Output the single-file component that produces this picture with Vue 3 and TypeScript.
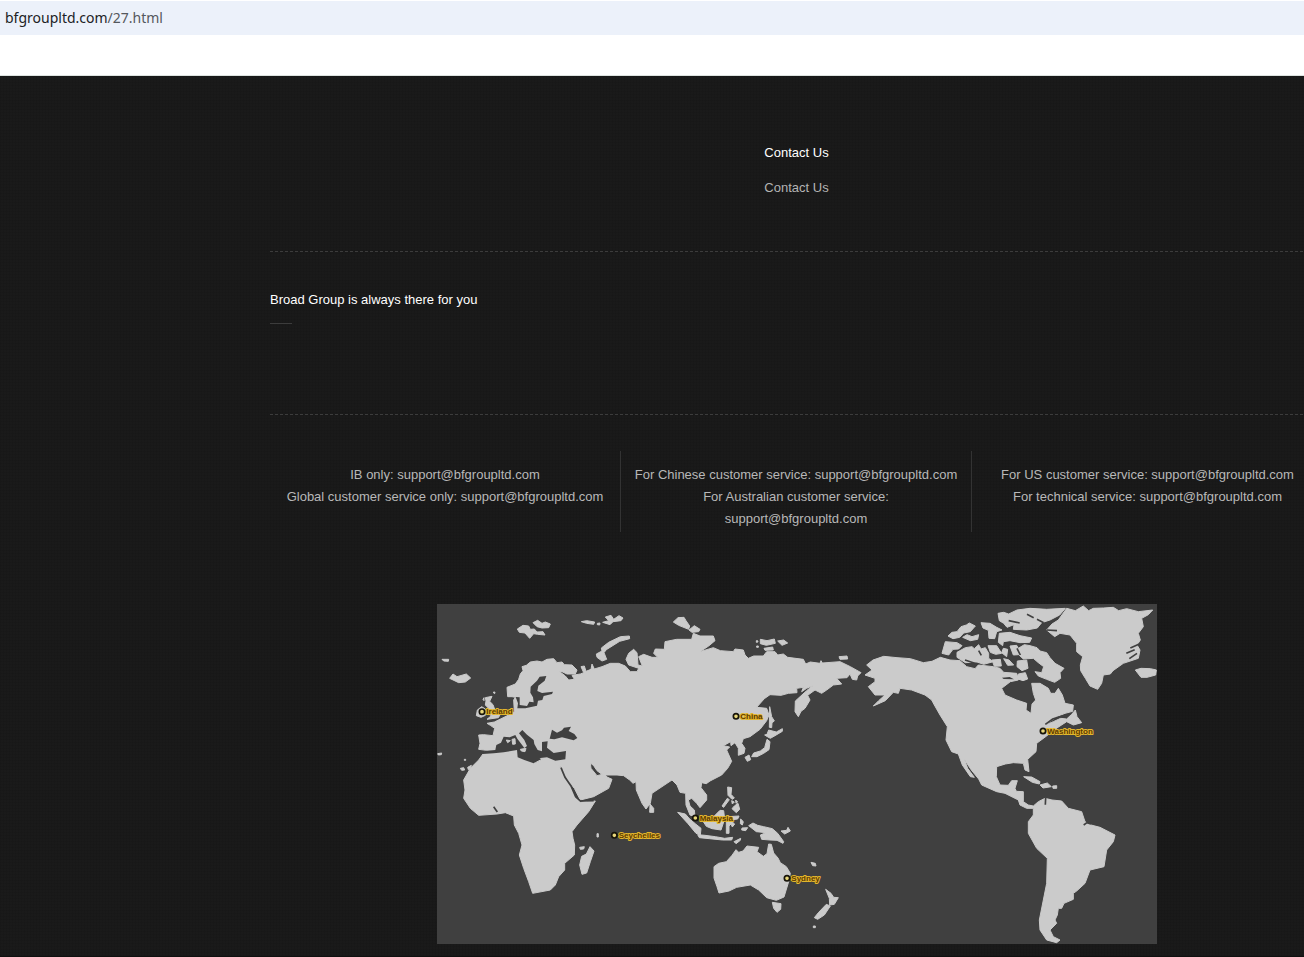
<script setup lang="ts">
interface Office {
  name: string
  x: number
  y: number
}

const services: string[][] = [
  ['IB only: support@bfgroupltd.com', 'Global customer service only: support@bfgroupltd.com'],
  ['For Chinese customer service: support@bfgroupltd.com', 'For Australian customer service: support@bfgroupltd.com'],
  ['For US customer service: support@bfgroupltd.com', 'For technical service: support@bfgroupltd.com'],
]

const offices: Office[] = [
  { name: 'Ireland', x: 135, y: 335 },
  { name: 'China', x: 897, y: 349 },
  { name: 'Washington', x: 1818, y: 393 },
  { name: 'Malaysia', x: 775, y: 654 },
  { name: 'Seychelles', x: 532, y: 706 },
  { name: 'Sydney', x: 1050, y: 835 },
]

const land: string[] = [
  // Europe and Asia
  'M125 448L129 430L125 405L140 404L168 407L173 385L160 376L150 370L172 366L195 355L215 345L232 335L230 300L235 292L225 290L212 290L210 262L235 252L245 238L250 222L258 212L255 200L268 196L280 186L300 183L315 186L330 178L350 176L360 188L375 186L382 194L405 195L420 210L415 222L390 222L375 215L368 215L385 228L395 240L412 238L405 226L430 222L440 218L432 200L442 198L447 214L462 208L465 192L472 207L495 200L520 190L545 190L565 198L580 215L600 215L605 205L575 195L567 178L575 160L590 148L600 158L602 180L603 195L616 198L605 170L620 163L645 172L662 172L650 160L655 147L682 148L684 125L719 118L764 118L769 100L789 108L829 108L834 122L815 138L789 155L829 143L850 152L889 155L894 147L919 150L924 165L934 175L950 168L979 168L989 155L1014 155L1022 165L1039 162L1052 172L1099 178L1106 192L1120 186L1149 190L1152 182L1156 189L1209 185L1240 200L1272 218L1262 228L1259 240L1246 238L1239 222L1230 233L1199 235L1214 252L1189 255L1169 270L1154 280L1134 270L1112 286L1119 300L1104 325L1092 334L1084 350L1074 335L1075 303L1109 272L1127 257L1109 265L1094 275L1099 262L1079 265L1080 278L1054 280L1032 286L999 284L982 296L959 322L989 325L996 345L989 362L969 388L939 410L919 416L914 430L924 445L921 460L904 466L904 445L894 428L882 437L881 425L859 437L878 441L869 450L884 484L872 505L854 525L819 543L808 551L794 548L792 563L809 585L809 600L789 623L779 610L764 595L754 600L759 618L772 630L774 650L759 645L747 615L746 580L729 577L720 555L705 540L690 550L645 580L640 610L627 627L615 610L598 570L597 545L588 550L578 540L560 527L540 525L505 525L492 521L480 512L470 497L460 489L462 505L480 527L500 522L512 532L525 538L515 565L470 590L430 600L412 565L395 545L370 500L300 470Z',
  // Africa
  'M143 455L200 450L240 462L295 488L330 470L367 498L382 530L400 555L415 590L430 607L452 604L475 603L455 635L420 675L405 695L408 715L413 735L412 765L383 790L383 810L365 830L355 855L340 870L287 880L275 845L260 805L247 765L255 735L245 700L232 675L230 648L215 642L205 638L180 642L125 646L100 625L80 595L84 570L80 540L100 505L125 480Z',
  // North and South America
  'M1289 195L1308 180L1340 169L1380 173L1420 176L1459 188L1485 184L1510 172L1539 180L1569 182L1589 200L1614 206L1624 195L1669 200L1689 205L1700 217L1739 220L1744 240L1720 245L1694 265L1704 285L1739 300L1769 310L1767 330L1782 340L1785 312L1796 300L1789 280L1784 250L1809 250L1834 265L1841 280L1854 280L1864 265L1876 285L1884 310L1909 315L1907 334L1884 340L1859 350L1825 375L1849 365L1871 355L1889 357L1904 343L1915 330L1920 350L1934 368L1909 375L1889 365L1869 378L1852 389L1826 410L1799 430L1797 455L1772 478L1776 515L1764 510L1759 490L1729 488L1705 492L1679 500L1678 530L1689 555L1714 556L1724 542L1741 542L1734 565L1738 574L1759 575L1759 605L1774 615L1789 618L1804 605L1824 595L1845 600L1874 603L1894 625L1934 635L1944 665L1962 675L1989 682L2034 705L2029 725L2009 750L2001 800L1959 810L1944 850L1919 873L1909 880L1909 898L1881 910L1874 925L1864 925L1861 945L1854 960L1859 970L1839 990L1849 1010L1869 1020L1859 1028L1829 1020L1809 990L1807 960L1819 900L1829 850L1831 775L1799 745L1774 700L1774 665L1789 645L1789 625L1769 625L1749 615L1744 600L1704 580L1679 575L1634 555L1625 537L1603 510L1582 478L1592 505L1612 532L1600 530L1576 495L1564 462L1544 455L1527 420L1531 380L1509 345L1492 315L1484 300L1464 285L1424 270L1389 265L1384 280L1369 277L1345 302L1309 318L1325 302L1344 285L1314 285L1294 260L1314 245L1314 235L1284 225L1305 210Z',
  // Greenland and Iceland
  'M1829 90L1845 72L1864 60L1889 25L1915 32L1939 18L1955 32L1969 25L2000 24L2029 22L2045 32L2069 26L2104 35L2147 30L2134 44L2114 55L2119 80L2104 100L2110 120L2100 135L2109 150L2104 175L2059 190L2028 212L2020 222L1999 225L1994 250L1982 268L1959 258L1945 235L1931 212L1930 195L1937 170L1919 155L1919 130L1899 105L1869 100L1853 110Z',
  'M2095 210L2112 205L2140 206L2158 210L2156 225L2130 232L2112 232Z',
  'M38 235L48 222L60 230L88 222L101 234L85 246L65 248Z',
  // Canadian islands
  'M1525 125L1560 128L1575 137L1565 147L1548 148L1535 165L1515 160Z',
  'M1560 157L1585 143L1605 140L1612 146L1625 134L1632 147L1645 143L1655 160L1655 175L1669 185L1640 193L1620 186L1585 188L1560 172Z',
  'M1533 108L1545 97L1560 95L1572 80L1588 75L1597 69L1615 78L1600 95L1580 99L1568 112L1548 116Z',
  'M1577 112L1590 104L1605 110L1625 104L1622 118L1600 122Z',
  'M1632 68L1659 70L1679 82L1695 90L1679 95L1673 116L1656 115L1654 91L1638 84Z',
  'M1653 137L1679 137L1694 160L1676 163L1660 157Z',
  'M1683 40L1700 37L1715 42L1740 30L1779 25L1829 28L1885 25L1868 45L1839 60L1814 68L1801 84L1769 90L1729 88L1731 74L1710 82L1700 70L1687 62Z',
  'M1687 100L1719 97L1749 107L1784 114L1778 127L1749 128L1719 122L1699 125L1697 137L1684 127Z',
  'M1719 138L1739 136L1744 145L1762 134L1779 137L1800 143L1809 153L1829 158L1839 173L1854 190L1881 205L1869 218L1871 235L1853 247L1829 238L1804 228L1794 215L1814 218L1820 200L1804 188L1789 175L1759 177L1745 164L1729 165Z',
  'M1699 145L1712 148L1709 170L1694 158Z',
  'M1665 180L1690 178L1693 198L1672 199Z',
  'M1700 176L1716 180L1730 195L1712 196Z',
  'M1741 183L1769 180L1773 205L1755 212L1740 200Z',
  'M1744 222L1765 218L1772 237L1758 242L1740 236Z',
  // Arctic Europe and Siberia
  'M241 87L258 76L275 78L280 88L292 87L300 96L318 95L324 105L302 103L290 101L278 115L264 99L247 97Z',
  'M288 68L302 61L315 70L325 66L340 72L335 83L315 84L300 80Z',
  'M433 65L449 62L473 66L470 73L449 70Z',
  'M481 70L489 69L488 75L481 74Z',
  'M497 67L515 62L505 51L522 46L530 58L546 47L558 54L552 62L528 65L519 74Z',
  'M478 162L495 153L493 144L515 127L550 110L577 108L578 116L548 124L508 149L501 158L509 178L495 183L480 172Z',
  'M709 66L723 53L741 52L747 62L758 78L755 88L725 76Z',
  'M756 90L772 77L789 88L785 95L765 97Z',
  'M970 118L990 122L1012 117L1015 130L988 136L970 131Z',
  'M958 122L962 122L963 126L958 127ZM959 138L964 138L964 142L959 142Z',
  'M1022 123L1040 120L1052 129L1035 136Z',
  'M981 145L1007 141L1009 150L984 151Z',
  'M1206 170L1230 168L1232 177L1209 178Z',
  'M15 178L35 178L34 184L20 183Z',
  // British Isles
  'M145 293L165 289L158 304L168 314L174 331L190 343L184 353L150 358L163 347L151 340L157 327L145 315L147 303Z',
  'M118 347L121 330L134 320L145 327L145 346L132 352Z',
  'M168 277L174 276L173 281ZM138 298L141 293L141 302Z',
  // Madagascar, Sri Lanka
  'M459 740L471 753L460 785L449 819L435 823L428 795L434 769L448 762Z',
  'M639 612L650 625L650 637L638 637Z',
  'M428 742L442 740L440 747L430 748Z',
  'M480 701L484 701L484 711L480 711Z',
  // Sumatra, Java, Borneo, Sulawesi
  'M722 637L745 642L758 657L776 672L792 685L790 705L777 700L753 671Z',
  'M782 704L804 706L835 710L863 715L887 712L884 720L857 720L817 716L787 713Z',
  'M799 665L817 663L849 631L860 632L863 657L852 690L825 686L808 679Z',
  'M868 665L874 650L906 648L902 657L879 660L893 672L886 681L882 672L876 678L876 700L868 700Z',
  'M891 725L911 715L910 721L897 731Z',
  // Philippines and Japan
  'M872 561L884 563L882 583L892 594L885 598L873 586Z',
  'M892 618L903 610L908 628L898 638L885 626Z',
  'M884 602L892 606L886 612ZM896 600L902 606L897 610Z',
  'M871 595L877 599L860 622L855 618Z',
  'M998 320L1004 350L1012 363L1005 368L1004 383L997 382Z',
  'M983 405L990 403L995 390L1018 396L1036 386L1036 394L1014 407L1000 415L991 410Z',
  'M990 418L999 425L996 449L980 460L960 470L944 470L950 459L970 453L983 443Z',
  'M924 472L936 465L941 479L931 484Z',
  // New Guinea and neighbours
  'M935 677L948 669L962 676L980 680L1006 686L1022 700L1040 725L1038 730L1020 721L999 720L974 718L970 705L987 698L958 695Z',
  'M1032 693L1049 691L1053 682L1060 693L1043 702Z',
  'M915 684L932 683L926 692L914 690Z',
  'M911 657L919 665L916 675L910 671Z',
  // Australia, Tasmania, New Zealand
  'M831 800L845 790L868 785L885 766L897 749L905 757L918 753L930 738L965 742L960 755L979 769L990 761L995 732L1003 733L1010 759L1023 774L1030 788L1048 800L1060 820L1055 845L1041 891L1018 901L989 893L965 870L940 855L899 862L876 873L846 879L840 860L831 834Z',
  'M1006 907L1032 911L1031 928L1020 937L1010 925Z',
  'M1166 868L1182 880L1190 892L1204 893L1192 913L1178 915L1177 895Z',
  'M1168 913L1180 918L1162 945L1142 958L1132 953L1145 937Z',
  'M1122 787L1135 790L1137 798L1127 797Z',
  'M1129 978L1135 978L1135 983L1129 983Z',
  // Caribbean
  'M1760 530L1784 531L1809 545L1807 552L1786 547Z',
  'M1809 555L1831 549L1843 560L1818 564Z',
  'M1847 558L1859 557L1859 565L1848 565Z',
  // Atlantic islands
  'M70 505L80 503L83 510L74 511Z',
  'M92 502L103 496L101 505L94 509Z',
  'M82 478L86 478L86 481L82 481Z',
  'M2 461L14 459L13 464L4 465Z',
]

const seas: string[] = [
  // Mediterranean
  'M132 459L143 453L175 450L178 435L192 428L200 410L218 412L235 405L241 416L262 444L270 438L262 420L246 400L256 390L270 404L290 420L292 432L302 450L315 454L315 426L332 424L330 443L350 459L387 453L385 478L355 482L330 472L310 474L290 490L262 480L242 472L240 450L200 457L170 460L137 462Z',
  // Black Sea
  'M338 416L345 389L360 398L375 391L381 383L402 380L395 393L412 402L421 414L410 421L375 412L352 418Z',
  // Baltic Sea
  'M236 291L248 292L248 315L270 318L277 305L290 307L288 292L280 278L281 260L300 242L308 230L328 228L323 242L304 257L301 273L315 279L348 275L345 282L320 288L316 300L303 302L300 317L265 325L241 325L243 310Z',
  // Hudson Strait
  'M1695 233L1718 231L1731 238L1700 237Z',
]

const isles: string[] = ['M225 418L234 416L235 432L227 433Z', 'M250 448L267 445L264 455L253 453Z', 'M208 420L220 422L212 428Z']
const channels: string[] = [
  'M2068 160L2093 149M2077 176L2100 160M2080 144L2107 132',
  'M1825 373L1847 357L1870 350L1890 346',
  'M1584 180L1620 192M1625 152L1633 166M1740 145L1750 165',
  'M170 620L181 636',
  'M372 503L384 532L402 558L416 590L430 603L470 602',
  'M1826 593L1825 614M1940 675L1950 668L1962 672',
  'M1715 62L1748 69M1770 43L1790 53M1800 58L1820 68M1860 92L1829 90',
]
</script>

<template>
  <div class="page">
    <header class="address">
      <span class="host">bfgroupltd.com</span><span class="path">/27.html</span>
    </header>
    <main class="site">
      <div class="content">
        <section class="intro">
          <h1>Contact Us</h1>
          <p>Contact Us</p>
        </section>
        <section class="slogan">
          <h2>Broad Group is always there for you</h2>
        </section>
        <section class="services">
          <div v-for="(lines, i) in services" :key="i" class="service">
            <p v-for="line in lines" :key="line">{{ line }}</p>
          </div>
        </section>
        <svg class="map" viewBox="0 12 2160 1020" role="img" aria-label="World map of offices">
          <rect class="sea" x="0" y="12" width="2160" height="1020" />
          <path v-for="d in land" :key="d" class="land" :d="d" />
          <path v-for="d in seas" :key="d" class="sea" :d="d" />
          <path v-for="d in isles" :key="d" class="land" :d="d" />
          <path v-for="d in channels" :key="d" class="channel" :d="d" />
          <g v-for="o in offices" :key="o.name">
            <text class="label" :x="o.x + 13" :y="o.y + 8">{{ o.name }}</text>
            <circle class="pin" :cx="o.x" :cy="o.y" r="8" />
          </g>
        </svg>
      </div>
    </main>
  </div>
</template>

<style>
body {
  margin: 0;
  background: #191919;
}
</style>

<style scoped>
.page {
  overflow: hidden;
  background: #fff;
  font-family: "Liberation Sans", Arial, sans-serif;
  font-size: 13px;
}

.address {
  height: 34px;
  margin: 1px 0 40px;
  padding-left: 5px;
  background: #ecf1fa;
  font-family: "Noto Sans", "Open Sans", sans-serif;
  font-size: 14px;
  line-height: 34px;
}

.host {
  color: #202124;
}

.path {
  color: #55585d;
}

.site {
  padding-left: 270px;
  border-top: 1px solid #dde3e0;
  border-bottom: 1px solid #101010;
  background-color: #1a1a1a;
  background-image:
    repeating-linear-gradient(90deg, rgb(0 0 0 / 6%) 0 1px, transparent 1px 3px),
    repeating-linear-gradient(rgb(0 0 0 / 6%) 0 1px, transparent 1px 3px);
}

/* The content column runs slightly past the right edge of the window. */
.content {
  margin-right: -19px;
  padding-bottom: 12px;
}

h1,
h2,
p {
  margin: 0;
  font-size: 13px;
  font-weight: 400;
}

.intro {
  padding: 65px 0 52px;
  text-align: center;
  line-height: 23px;
  border-bottom: 1px dashed #3c3c3c;
}

.intro h1 {
  margin-bottom: 12px;
  color: #fff;
}

.intro p {
  color: #b4b4b4;
}

.slogan {
  padding: 36px 0 90px;
  border-bottom: 1px dashed #3c3c3c;
}

.slogan h2 {
  color: #fff;
  line-height: 23px;
}

.slogan h2::after {
  display: block;
  width: 22px;
  margin-top: 12px;
  border-top: 1px solid #3c3c3c;
  content: "";
}

.services {
  display: grid;
  grid-template-columns: repeat(3, 1fr);
  margin: 36px 0 72px;
}

.service {
  padding: 13px 12px 2px;
  border-right: 1px solid #333;
  color: #b8b8b8;
  line-height: 22px;
  text-align: center;
}

.service:last-child {
  border-right: 0;
}

.map {
  display: block;
  width: 100%;
  max-width: 720px;
  margin: 0 auto;
}

.sea {
  fill: #404040;
}

.land {
  fill: #cbcbcb;
  stroke: #cbcbcb;
  stroke-width: 3;
  stroke-linejoin: round;
}

.channel {
  fill: none;
  stroke: #404040;
  stroke-width: 5;
}

.pin {
  fill: #e8d77a;
  stroke: #17140a;
  stroke-width: 5;
}

.label {
  fill: #5c3900;
  stroke: #e3b62c;
  stroke-width: 6;
  stroke-linejoin: round;
  paint-order: stroke;
  font-size: 24px;
  font-weight: 700;
}
</style>
